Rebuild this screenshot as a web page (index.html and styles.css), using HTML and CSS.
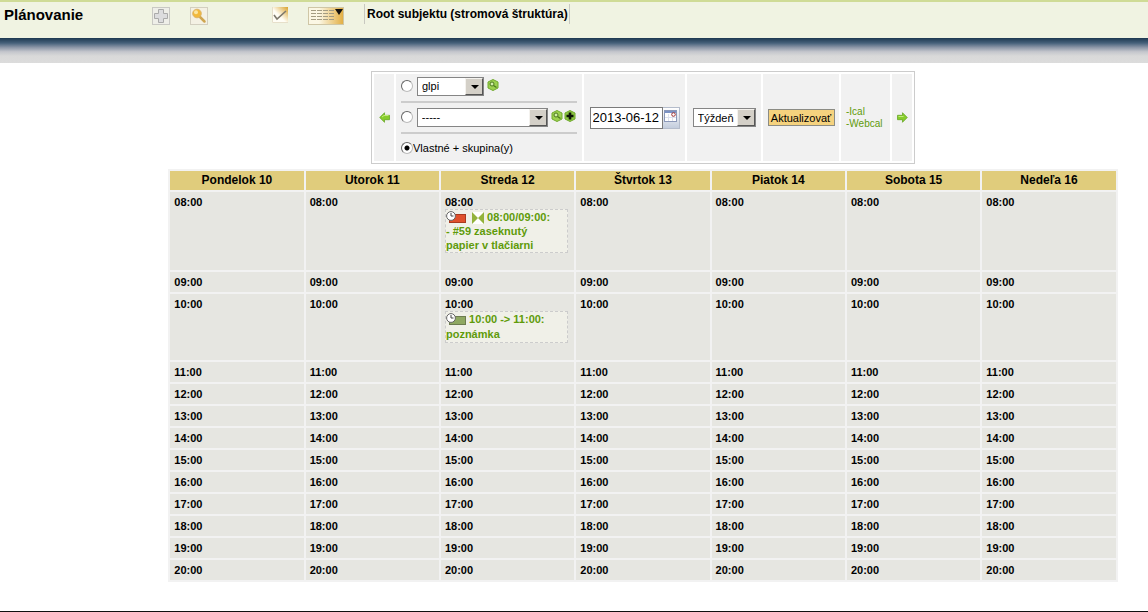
FILE: index.html
```
<!DOCTYPE html>
<html lang="sk">

<head>
  <meta charset="utf-8">
  <title>Plánovanie</title>
  <link rel="stylesheet" href="styles.css">
</head>

<body>
  <header>
    <div class="bar">
      <h1>Plánovanie</h1>
      <a href="#" class="icon add" title="Pridať">
        <svg width="18" height="18" viewBox="0 0 18 18">
          <rect x=".5" y=".5" width="17" height="17" fill="#eeeee8" stroke="#c9c9c4"/>
          <path d="M6.500 2.500h5v4h4v5h-4v4h-5v-4h-4v-5h4z" fill="#dcdcde" stroke="#aaa"/>
        </svg>
      </a>
      <a href="#" class="icon search" title="Hľadať">
        <svg width="18" height="18" viewBox="0 0 18 18">
          <rect x=".5" y=".5" width="17" height="17" fill="#f4f1e4" stroke="#d3cfc0"/>
          <path d="M9.500 9.500l5 5" stroke="#cfa650" stroke-width="2.500" stroke-linecap="round"/>
          <circle cx="7" cy="6.500" r="4.300" fill="#f2b93c" stroke="#dcb468"/>
          <circle cx="6" cy="5.200" r="2" fill="#fbe5a0"/>
        </svg>
      </a>
      <a href="#" class="icon check" title="Vybrať">
        <svg width="16" height="16" viewBox="0 0 16 16">
          <defs>
            <linearGradient id="gold" x1="0" y1="1" x2="1" y2="0">
              <stop offset=".45" stop-color="#fffdf5"/>
              <stop offset="1" stop-color="#d9a22c"/>
            </linearGradient>
          </defs>
          <rect width="16" height="16" fill="url(#gold)"/>
          <path d="M.5 0v15.500H16" fill="none" stroke="#e6dfca"/>
          <path d="M2 8l3 4 9-8" fill="none" stroke="#7d786c" stroke-width="1.600"/>
        </svg>
      </a>
      <a href="#" class="icon menu" title="Menu">
        <svg width="36" height="18" viewBox="0 0 36 18">
          <defs>
            <linearGradient id="gold-wide">
              <stop offset=".3" stop-color="#fbf7e4"/>
              <stop offset="1" stop-color="#e2ae42"/>
            </linearGradient>
          </defs>
          <rect x=".5" y=".5" width="35" height="17" fill="url(#gold-wide)" stroke="#cfc6a6"/>
          <path d="M3 3.500h23M3 6.500h23M3 9.500h23M3 12.500h23" stroke="#a39c82" stroke-dasharray="5 1"/>
          <path d="M27 2h8l-4 6z" fill="#111"/>
        </svg>
      </a>
      <a href="#" class="entity">Root subjektu (stromová štruktúra)</a>
    </div>
    <div class="shade"></div>
  </header>

  <main>
    <form class="filter">
      <div class="cell arrow">
        <a href="#" title="Predchádzajúci">
          <svg width="11" height="11" viewBox="0 0 11 11"><path d="M.7 5.500L5.500.7v2.600h5v4.400h-5v2.600z" fill="#86cc2c" stroke="#5fa01a" stroke-width=".7"/><path d="M3 5l2-1.500h4.500" fill="none" stroke="#c2ec78"/></svg>
        </a>
      </div>
      <div class="cell who">
        <div class="line">
          <input type="radio" name="who" id="who-user" aria-label="Používateľ">
          <span class="select user">
            <select aria-label="Používateľ"><option>glpi</option></select>
          </span>
          <svg class="hex" width="12" height="12" viewBox="0 0 12 12"><path d="M6 .5l5 2.500v6l-5 2.500-5-2.500V3z" fill="#9cd04e" stroke="#6fa82c"/><circle cx="5" cy="5" r="2" fill="#d3edaa" stroke="#4c7a1c"/><path d="M6.500 6.500L9.500 8.500" stroke="#4c7a1c" stroke-width="1.300"/></svg>
        </div>
        <hr>
        <div class="line">
          <input type="radio" name="who" id="who-group" aria-label="Skupina">
          <span class="select group">
            <select aria-label="Skupina"><option>-----</option></select>
          </span>
          <svg class="hex" width="12" height="12" viewBox="0 0 12 12"><path d="M6 .5l5 2.500v6l-5 2.500-5-2.500V3z" fill="#9cd04e" stroke="#6fa82c"/><circle cx="5" cy="5" r="2" fill="#d3edaa" stroke="#4c7a1c"/><path d="M6.500 6.500L9.500 8.500" stroke="#4c7a1c" stroke-width="1.300"/></svg>
          <svg class="hex" width="12" height="12" viewBox="0 0 12 12"><path d="M6 .5l5 2.500v6l-5 2.500-5-2.500V3z" fill="#8cc540" stroke="#6fa82c"/><path d="M6 2.500v7M2.500 6h7" stroke="#0c1405" stroke-width="2.600"/></svg>
        </div>
        <hr>
        <div class="line">
          <input type="radio" name="who" id="who-mine" checked>
          <label for="who-mine">Vlastné + skupina(y)</label>
        </div>
      </div>
      <div class="cell date">
        <input type="text" value="2013-06-12" aria-label="Dátum">
        <button type="button" class="picker" title="Kalendár">
          <svg width="13" height="13" viewBox="0 0 13 13"><rect x=".5" y="1.500" width="12" height="11" fill="#fff" stroke="#8b98b8"/><path d="M1 2h11v2H1z" fill="#7b92c4"/><path d="M4.500 5v7M8.500 5v7M1 8.500h11" stroke="#dde2ee"/><circle cx="9.500" cy="5.500" r="1.800" fill="#fff" stroke="#a03030"/></svg>
        </button>
      </div>
      <div class="cell period">
        <span class="select week">
          <select aria-label="Obdobie"><option>Týždeň</option></select>
        </span>
      </div>
      <div class="cell submit"><button type="button" class="refresh">Aktualizovať</button></div>
      <div class="cell export">
        <a href="#">-Ical</a>
        <a href="#">-Webcal</a>
      </div>
      <div class="cell arrow">
        <a href="#" title="Nasledujúci">
          <svg width="11" height="11" viewBox="0 0 11 11"><path d="M10.300 5.500L5.500.7v2.600h-5v4.400h5v2.600z" fill="#86cc2c" stroke="#5fa01a" stroke-width=".7"/><path d="M1.500 4.500h5" fill="none" stroke="#c2ec78"/></svg>
        </a>
      </div>
    </form>

    <table class="planning">
      <thead>
        <tr><th>Pondelok 10</th><th>Utorok 11</th><th>Streda 12</th><th>Štvrtok 13</th><th>Piatok 14</th><th>Sobota 15</th><th>Nedeľa 16</th></tr>
      </thead>
      <tbody>
        <tr>
          <td>08:00</td>
          <td>08:00</td>
          <td class="busy">08:00
            <a href="#" class="event">
              <svg width="20" height="13" viewBox="0 0 20 13"><rect x="3.500" y="3.500" width="16" height="8" fill="#e0502c" stroke="#a83a20"/><circle cx="5" cy="5" r="4.400" fill="#fff" stroke="#666"/><path d="M5 2v3h2.500" fill="none" stroke="#444"/></svg>
              <svg class="wait" width="12" height="12" viewBox="0 0 12 12"><path d="M0 0h12v12H0z" fill="#fff"/><path d="M0 0l6 6-6 6zM12 0L6 6l6 6z" fill="#93b23c"/></svg>
              08:00/09:00:<br>- #59 zaseknutý<br>papier v tlačiarni
            </a>
          </td>
          <td>08:00</td>
          <td>08:00</td>
          <td>08:00</td>
          <td>08:00</td>
        </tr>
        <tr><td>09:00</td><td>09:00</td><td>09:00</td><td>09:00</td><td>09:00</td><td>09:00</td><td>09:00</td></tr>
        <tr>
          <td>10:00</td>
          <td>10:00</td>
          <td class="busy">10:00
            <a href="#" class="event note">
              <svg width="20" height="13" viewBox="0 0 20 13"><rect x="3.500" y="3.500" width="16" height="8" fill="#8fa862" stroke="#6d7c50"/><circle cx="5" cy="5" r="4.400" fill="#fff" stroke="#666"/><path d="M5 2v3h2.500" fill="none" stroke="#444"/></svg>
              10:00 -&gt; 11:00:<br>poznámka
            </a>
          </td>
          <td>10:00</td>
          <td>10:00</td>
          <td>10:00</td>
          <td>10:00</td>
        </tr>
        <tr><td>11:00</td><td>11:00</td><td>11:00</td><td>11:00</td><td>11:00</td><td>11:00</td><td>11:00</td></tr>
        <tr><td>12:00</td><td>12:00</td><td>12:00</td><td>12:00</td><td>12:00</td><td>12:00</td><td>12:00</td></tr>
        <tr><td>13:00</td><td>13:00</td><td>13:00</td><td>13:00</td><td>13:00</td><td>13:00</td><td>13:00</td></tr>
        <tr><td>14:00</td><td>14:00</td><td>14:00</td><td>14:00</td><td>14:00</td><td>14:00</td><td>14:00</td></tr>
        <tr><td>15:00</td><td>15:00</td><td>15:00</td><td>15:00</td><td>15:00</td><td>15:00</td><td>15:00</td></tr>
        <tr><td>16:00</td><td>16:00</td><td>16:00</td><td>16:00</td><td>16:00</td><td>16:00</td><td>16:00</td></tr>
        <tr><td>17:00</td><td>17:00</td><td>17:00</td><td>17:00</td><td>17:00</td><td>17:00</td><td>17:00</td></tr>
        <tr><td>18:00</td><td>18:00</td><td>18:00</td><td>18:00</td><td>18:00</td><td>18:00</td><td>18:00</td></tr>
        <tr><td>19:00</td><td>19:00</td><td>19:00</td><td>19:00</td><td>19:00</td><td>19:00</td><td>19:00</td></tr>
        <tr><td>20:00</td><td>20:00</td><td>20:00</td><td>20:00</td><td>20:00</td><td>20:00</td><td>20:00</td></tr>
      </tbody>
    </table>
  </main>
  <footer></footer>
</body>

</html>
```
FILE: styles.css
```
* {
  box-sizing: border-box;
}

body {
  margin: 0;
  min-height: 100vh;
  display: flex;
  flex-direction: column;
  background: #fff;
  color: #000;
  font-family: "Liberation Sans", Arial, sans-serif;
  font-size: 11px;
}

a {
  color: #5f9b0a;
  text-decoration: none;
}

svg {
  display: block;
}

input, select, button {
  font-family: inherit;
  color: #000;
  margin: 0;
}

/* top bar */
.bar {
  display: flex;
  height: 38px;
  border-top: 2px solid #cfdb96;
  background: #f0f3e2;
}

h1 {
  width: 152px;
  margin: 0;
  padding: 5px 0 0 4px;
  font-size: 15px;
  line-height: 16px;
}

.icon {
  margin-top: 5px;
}

.search {
  margin-left: 20px;
}

.check {
  margin-left: 64px;
}

.menu {
  margin-left: 20px;
}

.entity {
  height: 20px;
  margin: 2px 0 0 20px;
  padding: 0 1px 0 2px;
  border: solid #c8c8c0;
  border-width: 0 1px;
  color: #000;
  font-size: 12px;
  font-weight: bold;
  line-height: 20px;
}

.shade {
  height: 25px;
  background: linear-gradient(#1d3850, #45607a 20%, #8d97a8 38%, #c4c6cc 55%, #d9d9d9 72%, #dcdcdc);
}

main {
  flex: 1;
  display: flex;
  flex-direction: column;
  align-items: center;
  gap: 5px;
  padding: 8px 0 24px 138px;
}

/* filter */
.filter {
  display: flex;
  gap: 2px;
  padding: 2px;
  border: 1px solid #ccc;
}

.cell {
  display: flex;
  align-items: center;
  justify-content: center;
  background: #f1f1f1;
}

.arrow {
  width: 20px;
}

.who {
  display: block;
  width: 186px;
  padding: 0 5px 1px;
}

.line {
  display: flex;
  align-items: center;
  height: 24px;
}

.who hr {
  height: 2px;
  margin: 3px 0 2px;
  border: 0;
  background: #ccc;
}

input[type=radio] {
  appearance: none;
  width: 12px;
  height: 12px;
  border: 1px solid;
  border-color: #666 #bbb #bbb #666;
  border-radius: 50%;
  background: #fff;
}

input[type=radio]:checked {
  background: radial-gradient(circle, #000 2px, #fff 3px);
}

.select {
  position: relative;
  display: block;
  height: 19px;
}

.select select {
  appearance: none;
  width: 100%;
  height: 100%;
  padding: 0 4px;
  border: 1px solid #858585;
  border-radius: 0;
  background: #fff;
  font-size: 11px;
}

/* drop-down button */
.select::before {
  content: "";
  position: absolute;
  top: 1px;
  right: 1px;
  bottom: 1px;
  width: 16px;
  border: 1px solid;
  border-color: #f4f2ee #555 #555 #f4f2ee;
  background: #d4d0c8;
  pointer-events: none;
}

.select::after {
  content: "";
  position: absolute;
  top: 8px;
  right: 5px;
  border: 4px solid transparent;
  border-top-color: #000;
  border-bottom: 0;
  pointer-events: none;
}

.user, .group {
  margin: 0 3px 0 4px;
}

.user {
  width: 67px;
}

.group {
  width: 133px;
}

.week {
  width: 63px;
}

.hex {
  flex-shrink: 0;
  margin: 0 1px 3px 0;
}

.date {
  width: 101px;
}

.date input {
  width: 73px;
  height: 22px;
  padding: 0 2px;
  border: 1px solid #7b7b7b;
  font-size: 13px;
}

.picker {
  width: 17px;
  height: 22px;
  padding: 0 0 4px 1px;
  border: 1px solid #b4bccb;
  border-left: 0;
  background: linear-gradient(#fff, #c3cddd);
}

.period {
  width: 74px;
}

.submit {
  width: 76px;
}

.refresh {
  width: 67px;
  height: 17px;
  padding: 0;
  border: 1px solid #8c8c84;
  background: #f5d27e;
  font-size: 11px;
  white-space: nowrap;
}

.export {
  flex-direction: column;
  align-items: flex-start;
  width: 49px;
  padding-left: 5px;
  font-size: 10px;
  line-height: 12px;
}

/* calendar */
.planning {
  width: 94%;
  table-layout: fixed;
  border-spacing: 2px;
  background: #f2f2f2;
  font-weight: bold;
}

.planning th {
  height: 19px;
  padding: 0;
  background: #e0cc7c;
  font-size: 12px;
  line-height: 19px;
}

.planning td {
  padding: 4px;
  background: #e6e6e1;
  line-height: 12px;
  vertical-align: top;
}

.planning .busy {
  padding-bottom: 17px;
}

.event {
  display: block;
  margin: 1px 2px 0 0;
  border: 1px dashed #ccc;
  background: #f0f0e8;
  line-height: 14px;
}

.note {
  line-height: 15px;
}

.event svg {
  display: inline-block;
  vertical-align: -3px;
}

.event .wait {
  margin-left: 3px;
}

footer {
  border-top: 1px solid #111;
}
```
